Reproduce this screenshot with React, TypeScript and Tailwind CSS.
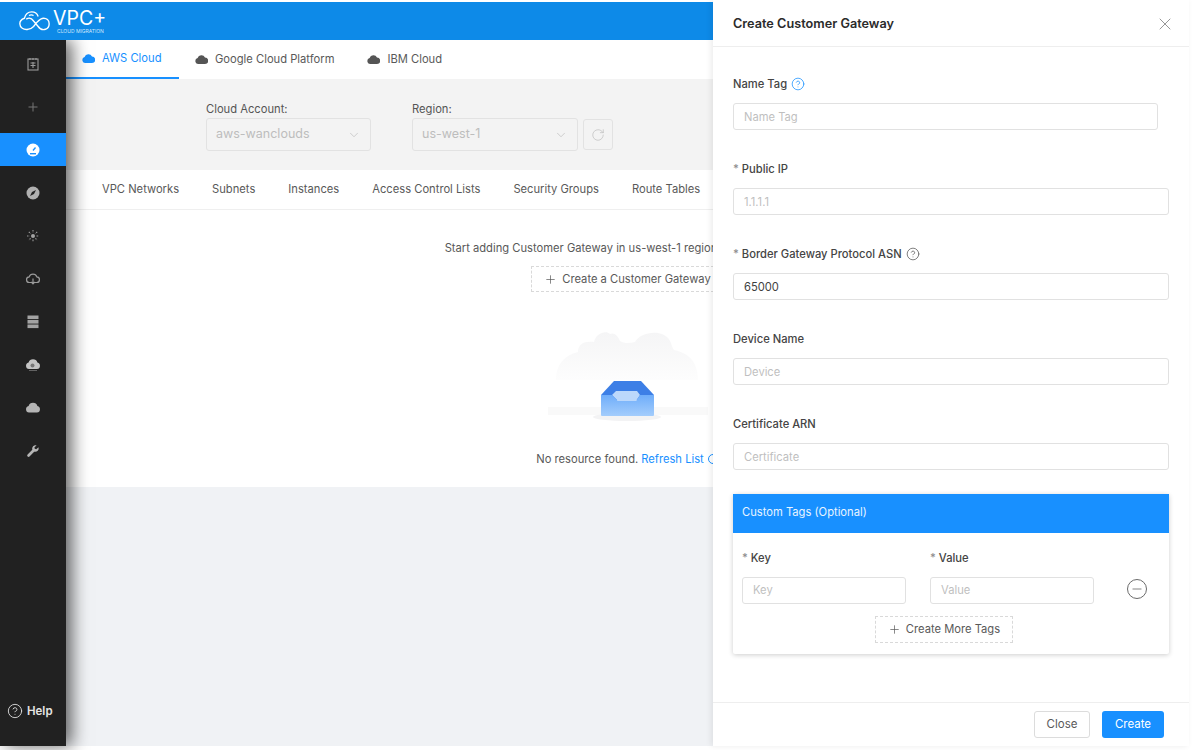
import { ChevronDown, CircleHelp, Minus, Plus, RotateCw, X } from "lucide-react";

const font = "font-['Inter','Liberation_Sans',sans-serif]";

function Logo() {
  return (
    <div className="flex items-center gap-[2px]">
      <svg width="33" height="24" viewBox="0 0 36 26" fill="none" stroke="white" strokeWidth="1.500">
        <path d="M11 22c-5 1-9-2-9-6 0-3 2-5 5-6 1-4 4-7 8-7 3 0 6 2 7 5" />
        <path d="M9 11c3-2 6-1 8 2l5 6c2 3 5 4 8 3 3-1 4-3 4-6 0-4-3-6-6-6-3 0-5 2-7 4l-4 5c-2 2-4 3-6 3" />
        <path d="M12 7c2-1 3-1 5 0" />
      </svg>
      <div className="flex flex-col">
        <span className="text-[19.500px] leading-[20px] font-normal text-white">VPC+</span>
        <span className="pl-[4px] text-[5px] leading-[6px] whitespace-nowrap text-[#cfe6fb]">CLOUD MIGRATION</span>
      </div>
    </div>
  );
}

function CloudIcon({ className }: { className: string }) {
  return (
    <svg width="13" height="9" viewBox="0 0 13 9" className={className}>
      <path d="M3 9a3 3 0 0 1-.4-5.900A4 4 0 0 1 10 2.600 3.200 3.200 0 0 1 10 9z" fill="currentColor" />
    </svg>
  );
}

function RailIcon({ index }: { index: number }) {
  const props = { width: 16, height: 16, viewBox: "0 0 16 16", fill: "none", stroke: "#9a9a9a" };
  if (index === 0)
    return (
      <svg {...props} strokeWidth="1.100">
        <rect x="3" y="3" width="10" height="11" />
        <path d="M5 2v2M8 2v2M11 2v2M5.500 7h5M5.500 9.500h5M8 6v6" />
      </svg>
    );
  if (index === 1)
    return (
      <svg {...props} stroke="#777777" strokeWidth="1">
        <path d="M8 3.500v9M3.500 8h9" />
      </svg>
    );
  if (index === 2)
    return (
      <svg {...props} stroke="none">
        <circle cx="8" cy="8" r="6.500" fill="white" />
        <path d="M8 8.500 10.500 5.500" stroke="#1890ff" strokeWidth="1.300" />
        <rect x="5" y="11" width="6" height="1.400" fill="#1890ff" />
      </svg>
    );
  if (index === 3)
    return (
      <svg {...props} stroke="none">
        <circle cx="8" cy="8" r="6.500" fill="#b0b0b0" />
        <path d="M11 5 9 9 5 11 7 7z" fill="#222222" />
      </svg>
    );
  if (index === 4)
    return (
      <svg {...props} strokeWidth="1.100" strokeDasharray="1.500 0.800">
        <circle cx="8" cy="8" r="2" fill="#a3a3a3" stroke="none" />
        <path d="M8 2v2.500M8 11.500V14M2 8h2.500M11.500 8H14M3.800 3.800l1.800 1.800M10.400 10.400l1.800 1.800M12.200 3.800l-1.800 1.800M5.600 10.400l-1.800 1.800" />
      </svg>
    );
  if (index === 5)
    return (
      <svg {...props} strokeWidth="1.200">
        <path d="M4.500 11.500a2.800 2.800 0 0 1-.3-5.600 4 4 0 0 1 7.600 0 2.800 2.800 0 0 1-.3 5.600z" />
        <path d="M8 7.500v5M6.300 11 8 12.800 9.700 11" />
      </svg>
    );
  if (index === 6)
    return (
      <svg {...props} stroke="none">
        <rect x="2.500" y="1.500" width="11" height="3.600" fill="#a3a3a3" />
        <rect x="2.500" y="6" width="11" height="3.600" fill="#a3a3a3" />
        <rect x="2.500" y="10.500" width="11" height="3.600" fill="#a3a3a3" />
      </svg>
    );
  if (index === 7)
    return (
      <svg {...props} stroke="none">
        <path d="M4 12a3.300 3.300 0 0 1-.4-6.500 4.600 4.600 0 0 1 8.800 0A3.300 3.300 0 0 1 12 12z" fill="#c4c4c4" />
        <circle cx="7.500" cy="8.500" r="2" fill="#777777" />
        <path d="M5 13v1M7 13v1M9 13v1M11 13v1" stroke="#a3a3a3" />
      </svg>
    );
  if (index === 8)
    return (
      <svg {...props} stroke="none">
        <path d="M4 12.500a3.300 3.300 0 0 1-.4-6.500 4.600 4.600 0 0 1 8.800 0 3.300 3.300 0 0 1-.4 6.500z" fill="#b5b5b5" />
      </svg>
    );
  return (
    <svg {...props} stroke="none">
      <path d="M13.500 4.200 11.200 6.300 9.800 5.800 9.400 4.400 11.600 2.300A3.500 3.500 0 0 0 7.300 6.800L2.600 11.500a1.300 1.300 0 0 0 1.900 1.900l4.700-4.700a3.500 3.500 0 0 0 4.300-4.500z" fill="#b5b5b5" />
    </svg>
  );
}

function Rail() {
  return (
    <aside className="relative z-10 flex w-[66px] shrink-0 flex-col bg-[#212121] shadow-[6px_0_16px_rgba(0,0,0,0.6)]">
      <div className="flex flex-col pt-[2px]">
        {Array.from({ length: 10 }, (_, i) => (
          <div key={i} className="flex h-[43px] items-center">
            <div className={`flex h-[33px] w-full items-center justify-center ${i === 2 ? "bg-[#1890ff]" : ""}`}>
              <RailIcon index={i} />
            </div>
          </div>
        ))}
      </div>
      <div className="mt-auto mb-[26px] flex items-center gap-[4px] pl-[7px] text-[11.500px] font-semibold text-[#e5e5e5]">
        <CircleHelp size={16} strokeWidth={1.300} />
        Help
      </div>
    </aside>
  );
}

function Select({ value, width }: { value: string; width: string }) {
  return (
    <div className={`flex h-[33px] items-center justify-between rounded-[3px] border border-[#e2e2e2] bg-[#f3f3f3] pr-[9px] pl-[9px] text-[12.500px] text-[#bdbdbd] ${width}`}>
      {value}
      <ChevronDown size={14} strokeWidth={1.200} />
    </div>
  );
}

function Field({
  label,
  required,
  help,
  placeholder,
  value,
  width = "w-full",
}: {
  label: string;
  required?: boolean;
  help?: string;
  placeholder?: string;
  value?: string;
  width?: string;
}) {
  return (
    <div className="h-[85px]">
      <div className="flex h-[20px] items-center gap-[4px] text-[11.200px] font-medium text-[#444444]">
        <span>
          {required ? <span className="mr-[3px] text-[#8c8c8c]">*</span> : null}
          {label}
        </span>
        {help ? <CircleHelp size={14} strokeWidth={1.300} className={help} /> : null}
      </div>
      <div className={`mt-[9px] flex h-[27px] items-center rounded-[3px] border border-[#e1e1e1] bg-white px-[10px] pt-[1px] text-[11.200px] ${value ? "text-[#3f3f3f]" : "text-[#bfbfbf]"} ${width}`}>
        {value ?? placeholder}
      </div>
    </div>
  );
}

function TagInput({ label }: { label: string }) {
  return (
    <div className="w-[164px]">
      <div className="text-[11.200px] leading-[18px] font-medium text-[#444444]">
        <span className="mr-[3px] text-[#8c8c8c]">*</span>
        {label}
      </div>
      <div className="mt-[10px] flex h-[27px] items-center rounded-[3px] border border-[#e1e1e1] px-[10px] text-[11.200px] text-[#bfbfbf]">
        {label}
      </div>
    </div>
  );
}

function Drawer() {
  return (
    <section className="absolute top-0 right-[11px] bottom-[4px] z-20 flex w-[476px] flex-col bg-white shadow-[-2px_0_6px_rgba(0,0,0,0.08)]">
      <header className="flex h-[47px] shrink-0 items-center justify-between border-b border-[#eeeeee] pt-[2px] pr-[14px] pl-[20px]">
        <h2 className="text-[12.700px] font-semibold text-[#2b2b2b]">Create Customer Gateway</h2>
        <X size={20} strokeWidth={1.100} className="text-[#8c8c8c]" />
      </header>
      <div className="flex-1 px-[20px] pt-[27px]">
        <Field label="Name Tag" help="text-[#1890ff]" placeholder="Name Tag" width="w-[425px]" />
        <Field label="Public IP" required placeholder="1.1.1.1" />
        <Field label="Border Gateway Protocol ASN" required help="text-[#595959]" value="65000" />
        <Field label="Device Name" placeholder="Device" />
        <Field label="Certificate ARN" placeholder="Certificate" />
        <div className="-mt-[5px] rounded-[2px] bg-white shadow-[0_1px_5px_rgba(0,0,0,0.2)]">
          <div className="flex h-[39px] items-center bg-[#1890ff] pb-[2px] pl-[9px] text-[11.200px] text-[#e8f4ff]">
            Custom Tags (Optional)
          </div>
          <div className="px-[9px] pt-[16px] pb-[11px]">
            <div className="flex items-end gap-[24px]">
              <TagInput label="Key" />
              <TagInput label="Value" />
              <div className="mb-[5px] ml-[9px] flex h-[20px] w-[20px] items-center justify-center rounded-full border border-[#6b6b6b] text-[#6b6b6b]">
                <Minus size={14} strokeWidth={1.400} />
              </div>
            </div>
            <div className="mt-[12px] mr-[14px] flex justify-center">
              <div className="flex h-[27px] items-center gap-[5px] border border-dashed border-[#d9d9d9] px-[12px] text-[11.200px] text-[#595959]">
                <Plus size={13} strokeWidth={1.300} />
                Create More Tags
              </div>
            </div>
          </div>
        </div>
      </div>
      <footer className="flex h-[44px] shrink-0 items-center justify-end gap-[12px] border-t border-[#eeeeee] pr-[25px]">
        <button className="h-[27px] w-[56px] rounded-[3px] border border-[#dcdcdc] text-[11.500px] text-[#595959]">Close</button>
        <button className="h-[27px] w-[62px] rounded-[3px] bg-[#1890ff] text-[11.500px] text-white">Create</button>
      </footer>
    </section>
  );
}

function EmptyArt() {
  return (
    <svg width="180" height="92" viewBox="-10 0 180 92" className="mt-[38px]">
      <defs>
        <linearGradient id="cloud" x1="0" y1="0" x2="0" y2="1">
          <stop offset="0" stopColor="#f5f5f6" />
          <stop offset="1" stopColor="#fdfdfd" />
        </linearGradient>
        <linearGradient id="tray" x1="0" y1="0" x2="0" y2="1">
          <stop offset="0" stopColor="#6fadfa" />
          <stop offset="1" stopColor="#a3cdfc" />
        </linearGradient>
      </defs>
      <path d="M8 50C8 30 22 24 30 22C30 14 36 11 46 12C48 3 58 0 62 4C66 2 70 6 72 11C77 14 82 13 87 12C92 2 112-1 120 8C124 13 124 18 126 20C136 22 150 28 150 50Z" fill="url(#cloud)" />
      <rect x="0" y="77" width="160" height="8" fill="#f9f9f9" />
      <ellipse cx="79" cy="87" rx="34" ry="4" fill="#f3f3f4" />
      <path d="M53 65 66 51H93L106 65V70H53z" fill="#3d7fe6" />
      <path d="M64 65 68 61H89L92 65 88 71H70z" fill="#bcd8fb" />
      <path d="M53 65H64L70 71H88L92 65H106V85a1 1 0 0 1-1 1H54a1 1 0 0 1-1-1z" fill="url(#tray)" />
    </svg>
  );
}

export default function App() {
  const tabs = ["VPC Networks", "Subnets", "Instances", "Access Control Lists", "Security Groups", "Route Tables"];

  return (
    <div className={`relative h-[750px] w-[1200px] overflow-hidden bg-white pt-[2px] pr-[11px] pb-[4px] ${font}`}>
      <div className="flex h-full min-w-0 flex-col">
        <div className="relative z-20 flex h-[38px] shrink-0 items-center bg-[#0d8ae8] pl-[18px]">
          <Logo />
        </div>
        <div className="flex min-h-0 flex-1">
          <Rail />
          <main className="flex min-w-0 flex-1 flex-col overflow-hidden bg-[#f0f2f5]">
            <nav className="flex h-[39px] shrink-0 items-stretch bg-white text-[11.200px] text-[#595959]">
              <div className="flex w-[113px] items-center gap-[7px] border-b-2 border-[#1890ff] pl-[16px] text-[#1890ff]">
                <CloudIcon className="text-[#1890ff]" />
                AWS Cloud
              </div>
              <div className="ml-[16px] flex items-center gap-[7px]">
                <CloudIcon className="text-[#555555]" />
                Google Cloud Platform
              </div>
              <div className="ml-[33px] flex items-center gap-[7px]">
                <CloudIcon className="text-[#555555]" />
                IBM Cloud
              </div>
            </nav>
            <div className="flex h-[91px] shrink-0 items-start gap-[41px] bg-[#f3f3f3] pt-[22px] pl-[140px]">
              <div>
                <div className="mb-[1px] text-[11.200px] leading-[16px] text-[#555555]">Cloud Account:</div>
                <Select value="aws-wanclouds" width="w-[165px]" />
              </div>
              <div>
                <div className="mb-[1px] text-[11.200px] leading-[16px] text-[#555555]">Region:</div>
                <div className="flex items-center gap-[5px]">
                  <Select value="us-west-1" width="w-[166px]" />
                  <div className="flex h-[31px] w-[30px] items-center justify-center rounded-[3px] border border-[#e2e2e2] text-[#bdbdbd]">
                    <RotateCw size={14} strokeWidth={1.200} />
                  </div>
                </div>
              </div>
            </div>
            <div className="flex h-[40px] shrink-0 items-center gap-[33px] border-b border-[#efefef] bg-white pl-[36px] text-[11.200px] whitespace-nowrap text-[#595959]">
              {tabs.map((tab) => (
                <span key={tab}>{tab}</span>
              ))}
            </div>
            <div className="flex h-[277px] shrink-0 flex-col items-center bg-white pt-[30px]">
              <p className="mr-[93px] text-[11.200px] leading-[16px] whitespace-nowrap text-[#595959]">
                Start adding Customer Gateway in us-west-1 region
              </p>
              <div className="mt-[10px] flex h-[26px] items-center gap-[5px] border border-dashed border-[#d9d9d9] px-[12px] text-[11.200px] whitespace-nowrap text-[#595959]">
                <Plus size={13} strokeWidth={1.300} />
                Create a Customer Gateway
              </div>
              <EmptyArt />
              <p className="mt-[29px] flex items-center gap-[3px] text-[11.200px] leading-[16px] whitespace-nowrap text-[#595959]">
                No resource found.
                <span className="text-[#1890ff]">Refresh List</span>
                <RotateCw size={12} className="text-[#1890ff]" />
              </p>
            </div>
          </main>
        </div>
      </div>
      <Drawer />
    </div>
  );
}
